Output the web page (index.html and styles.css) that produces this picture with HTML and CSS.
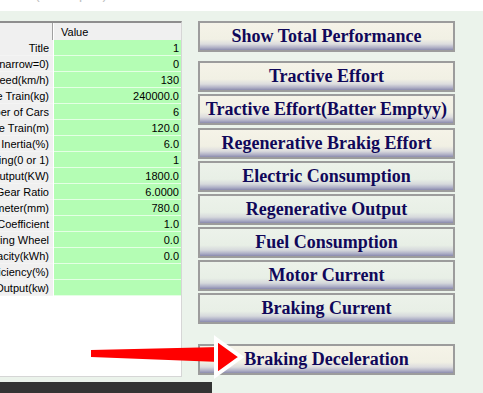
FILE: index.html
```html
<!DOCTYPE html>
<html lang="en">
<head>
  <meta charset="UTF-8" />
  <meta name="viewport" content="width=device-width, initial-scale=1.0"/>
  <title>Performance Simulation</title>
  <link rel="stylesheet" href="styles.css">
</head>
<body>
  <header class="top">
    <span class="top-text">(Graph)</span>
  </header>
  <main class="main">
    <div class="left">
      <div class="grid">
        <div class="grid-head">
          <div class="hd-name"></div>
          <div class="hd-value">Value</div>
        </div>
        <div id="rows"></div>
      </div>
    </div>
    <div class="buttons">
      <button class="btn">Show Total Performance</button>
      <button class="btn mt9">Tractive Effort</button>
      <button class="btn">Tractive Effort(Batter Emptyy)</button>
      <button class="btn mt1">Regenerative Brakig Effort</button>
      <button class="btn green">Electric Consumption</button>
      <button class="btn green">Regenerative Output</button>
      <button class="btn green">Fuel Consumption</button>
      <button class="btn green">Motor Current</button>
      <button class="btn green">Braking Current</button>
      <button class="btn mt18">Braking Deceleration</button>
    </div>
  </main>
  <div class="statusbar"></div>

  <svg class="arrow" width="160" height="46" viewBox="88 334 160 46">
    <polygon points="91,350 220,347 220,362 91,357" fill="#f00"/>
    <polygon points="216,339 241,357 216,375" fill="#f00" stroke="#fff" stroke-width="4" stroke-linejoin="miter"/>
  </svg>

  <script>
    const params = [
      ['Title', '1'],
      ['Gauge(wide=1,narrow=0)', '0'],
      ['Max Speed(km/h)', '130'],
      ['Weight of the Train(kg)', '240000.0'],
      ['Number of Cars', '6'],
      ['Length of the Train(m)', '120.0'],
      ['Rotational Inertia(%)', '6.0'],
      ['Regenerative Braking(0 or 1)', '1'],
      ['Motor Output(KW)', '1800.0'],
      ['Gear Ratio', '6.0000'],
      ['Wheel Diameter(mm)', '780.0'],
      ['Adhesion Coefficient', '1.0'],
      ['Number of Driving Wheel', '0.0'],
      ['Battery Capacity(kWh)', '0.0'],
      ['Battery Efficiency(%)', ''],
      ['Max Battery Output(kw)', '']
    ];
    let html = '';
    params.forEach(p => {
      html += `
        <div class="row">
          <div class="name"><span>${p[0]}</span></div>
          <div class="value">${p[1]}</div>
        </div>
      `;
    });
    document.getElementById('rows').innerHTML = html;
  </script>
</body>
</html>
```

FILE: styles.css
```css
body { margin: 0; padding: 0; background: #ebf3eb; width: 483px; height: 393px; overflow: hidden; position: relative; font-family: "Liberation Sans", Arial, sans-serif; }
.top { height: 11px; background: #fff; overflow: hidden; padding-left: 35px; }
.top-text { display: block; margin-top: -16px; font-size: 14px; line-height: 20px; color: #c0c0c0; letter-spacing: 4px; }
.main { display: flex; padding-top: 10px; height: 356px; }
.left { width: 182px; }
.grid { width: 182px; height: 356px; box-sizing: border-box; background: #fff; border-top: 2px solid #8e8e8e; border-right: 1px solid #d6d6d6; border-bottom: 1px solid #d6d6d6; overflow: hidden; }
.grid-head { display: flex; height: 17px; background: #f0f0f0; font-size: 11px; line-height: 19px; color: #000; }
.hd-name { width: 52px; border-right: 1px solid #a0a0a0; box-shadow: 1px 0 0 #fff; }
.hd-value { padding-left: 8px; }
.row { display: flex; height: 16px; font-size: 11px; line-height: 16px; color: #000; }
.name { width: 53px; background: #f0f0f0; display: flex; justify-content: flex-end; overflow: hidden; white-space: nowrap; padding-right: 4px; box-sizing: border-box; border-bottom: 1px solid #f4f4f4; }
.name span { flex-shrink: 0; }
.value { width: 127px; margin-left: 1px; background: #b4fdb4; border-bottom: 1px solid #e4ffe4; text-align: right; padding-right: 2px; box-sizing: border-box; }
.buttons { display: flex; flex-direction: column; gap: 2px; margin-left: 16px; width: 257px; }
.btn { height: 31px; box-sizing: border-box; border: 2px solid #9c9c9c; padding: 0; font-family: "Liberation Serif", "Times New Roman", serif; font-weight: bold; font-size: 18px; color: #10085a; white-space: nowrap; background: linear-gradient(to bottom, #f5f3e8 0%, #f1f0e4 60%, #dcdcde 78%, #b4b4c8 90%, #8c8cae 100%); }
.btn.green { background: linear-gradient(to bottom, #ecf2ea 0%, #e8efe6 60%, #d6d9dc 78%, #b0b2c8 90%, #8a8aae 100%); }
.mt9 { margin-top: 7px; }
.mt1 { margin-top: 1px; }
.mt18 { margin-top: 18px; }
.statusbar { position: absolute; left: 0; top: 382px; width: 212px; height: 11px; background: #333; }
.arrow { position: absolute; left: 88px; top: 334px; }
```
